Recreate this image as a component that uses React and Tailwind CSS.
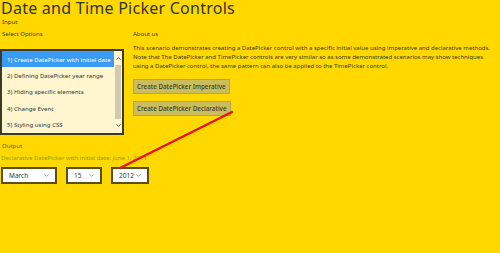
import { ChevronDown, ChevronUp } from "lucide-react";

const options = [
  "1) Create DatePicker with initial date",
  "2) Defining DatePicker year range",
  "3) Hiding specific elements",
  "4) Change Event",
  "5) Styling using CSS",
];

function Select({ value, width }) {
  return (
    <div
      className={`flex items-center justify-between h-[17px] bg-white border-2 border-[#5a4e1a] pl-[6px] pr-[5px] text-[6.5px] text-[#333] ${width}`}
    >
      <span>{value}</span>
      <ChevronDown size={7} strokeWidth={2} className="text-[#555]" />
    </div>
  );
}

function App() {
  return (
    <div
      className="relative w-[500px] h-[253px] overflow-hidden bg-[#ffd800] text-[#3a3a2a]"
      style={{ fontFamily: '"Noto Sans", "Open Sans", sans-serif' }}
    >
      <h1 className="text-[16px] leading-[17px] tracking-[0.25px] text-[#333] pl-[1px] whitespace-nowrap">
        Date and Time Picker Controls
      </h1>
      <div className="text-[6px] leading-[8px] mt-[1px] pl-[2px]">Input</div>

      <div className="flex mt-[4px]">
        {/* Select options */}
        <div className="w-[124px]">
          <div className="text-[6px] leading-[8px] pl-[2px]">Select Options</div>
          <div className="mt-[11px] flex border-2 border-[#3d3a2a] bg-[#fff6cf] h-[86px]">
            <div className="flex-1 flex flex-col">
              {options.map((o, i) => (
                <div
                  key={o}
                  className={`flex-1 flex items-center pl-[5px] text-[6.1px] whitespace-nowrap ${
                    i === 0 ? "bg-[#3a9bf5] text-white" : "text-[#333]"
                  }`}
                >
                  {o}
                </div>
              ))}
            </div>
            <div className="w-[8px] flex flex-col items-center bg-[#fff6cf]">
              <ChevronUp size={7} strokeWidth={3} className="text-[#444] mt-[4px]" />
              <div className="w-[6px] flex-1 bg-[#cfcab0] my-[3px]" />
              <ChevronDown size={7} strokeWidth={3} className="text-[#444] mb-[4px]" />
            </div>
          </div>
        </div>

        {/* About */}
        <div className="ml-[9px] flex-1">
          <div className="text-[6px] leading-[8px]">About us</div>
          <p className="mt-[6px] max-w-[365px] text-[6px] leading-[9px] text-[#3a3a2a]">
            This scenario demonstrates creating a DatePicker control with a specific initial value using imperative and
            declarative methods. Note that The DatePicker and TimePicker controls are very similar so as some
            demonstrated scenarios may show techniques using a DatePicker control, the same pattern can also be applied
            to the TimePicker control.
          </p>
          <div className="mt-[8px] flex flex-col items-start gap-[7px]">
            <button className="h-[15px] px-[3px] bg-[#cbbd5c] border border-[#b3a54a] text-[6.3px] font-medium text-[#3a3a2a]">
              Create DatePicker Imperative
            </button>
            <button className="h-[15px] px-[3px] bg-[#cbbd5c] border border-[#b3a54a] text-[6.3px] font-medium text-[#3a3a2a]">
              Create DatePicker Declarative
            </button>
          </div>
        </div>
      </div>

      <div className="text-[6px] leading-[8px] mt-[7px] pl-[2px] text-[#6b6030]">Output</div>
      <div className="text-[6px] leading-[8px] mt-[4px] pl-[1px] text-[#8aa300]">
        Declarative DatePicker with initial date: June 1, 2011
      </div>
      <div className="flex gap-[9px] mt-[5px] pl-[1px]">
        <Select value="March" width="w-[56px]" />
        <Select value="15" width="w-[36px]" />
        <Select value="2012" width="w-[38px]" />
      </div>

      {/* annotation arrow */}
      <svg className="absolute left-0 top-0 pointer-events-none" width="500" height="253">
        <line x1="232" y1="112" x2="120" y2="168" stroke="#e8141c" strokeWidth="2.5" strokeLinecap="round" />
      </svg>
    </div>
  );
}

export default App;
